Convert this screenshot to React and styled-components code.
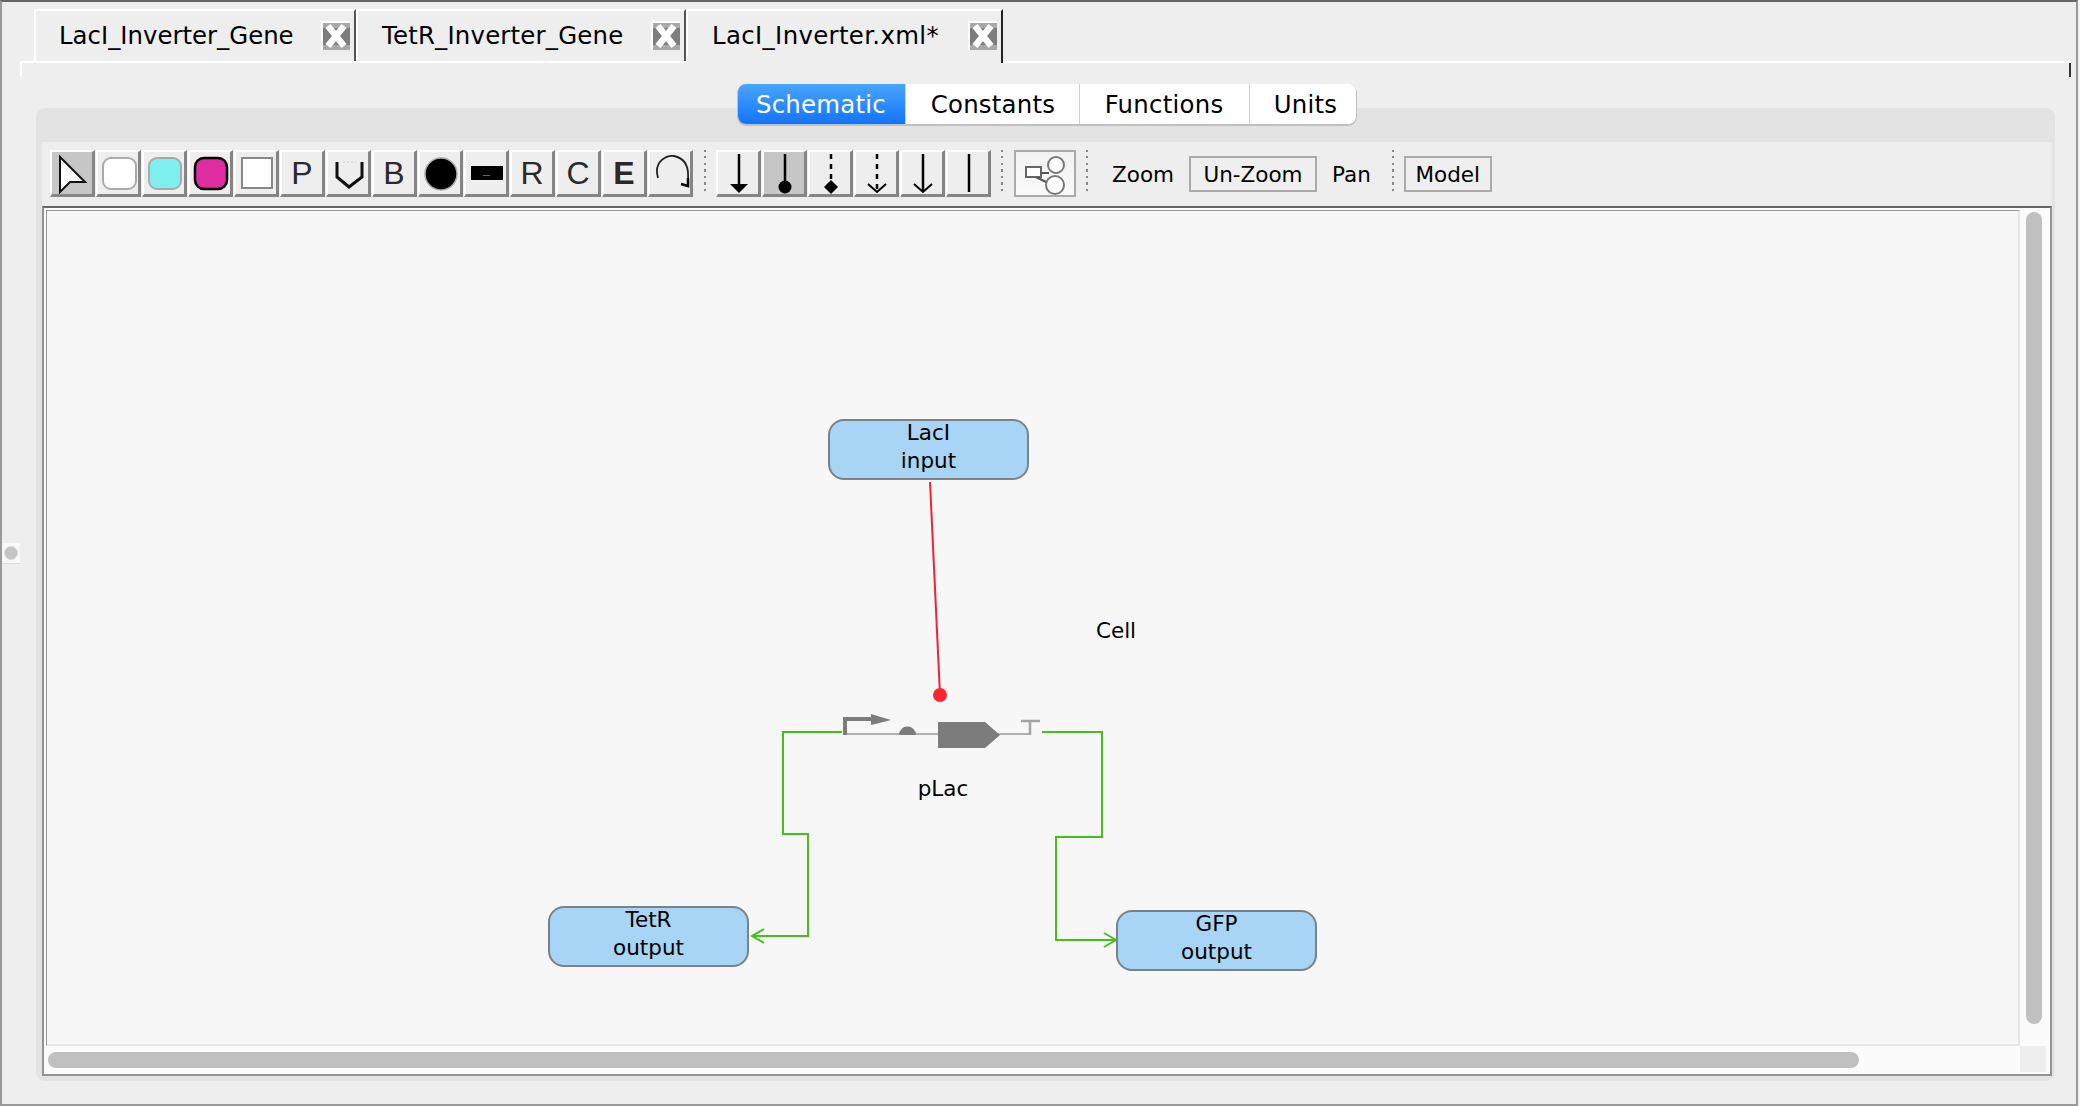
import React from 'react';
import styled, { createGlobalStyle } from 'styled-components';

const Global = createGlobalStyle`
    html, body {
        margin: 0;
        padding: 0;
        background: #f4f4f4;
    }
    body {
        font-family: "DejaVu Sans", "Liberation Sans", sans-serif;
        color: #000;
    }
`;

const Frame = styled.div`
    position: relative;
    box-sizing: border-box;
    width: 2078px;
    height: 1106px;
    background: #eeeeee;
    border: 2px solid #999;
    border-top-color: #666;
    overflow: hidden;
`;

const Handle = styled.div`
    position: absolute;
    left: 0;
    top: 541px;
    width: 18px;
    height: 20px;
    background: #f8f8f8;
    border-bottom: 1px solid #ddd;
    display: flex;
    align-items: center;
    justify-content: center;
    &::after {
        content: '';
        width: 12px;
        height: 12px;
        border-radius: 50%;
        background: #c4c4c4;
        border: 1px solid #d8d8d8;
    }
`;

const TabStrip = styled.div`
    display: flex;
    height: 51px;
    padding: 7px 0 0 32px;
    box-sizing: content-box;
`;

const Tab = styled.div`
    position: relative;
    box-sizing: border-box;
    width: ${(p) => p.$w}px;
    height: ${(p) => (p.$active ? 54 : 52)}px;
    display: flex;
    align-items: center;
    padding: 0 4px ${(p) => (p.$active ? 4 : 2)}px 23px;
    background: #eeeeee;
    border-top: 2px solid #fff;
    border-left: 2px solid #fff;
    border-right: 2px solid ${(p) => (p.$active ? '#222' : '#555')};
    font-size: 24.4px;
    z-index: 1;
`;

const TabLabel = styled.span`
    flex: 1;
    margin-left: ${(p) => p.$ml || 0}px;
    letter-spacing: ${(p) => p.$ls || 0}px;
    white-space: nowrap;
`;

const CloseBox = styled.svg`
    width: 29px;
    height: 29px;
    flex: none;
`;

const TabRule = styled.div`
    box-sizing: border-box;
    height: 15px;
    margin: 1px 5px 0 18px;
    border-top: 2px solid #fff;
    border-left: 2px solid #fff;
    display: flex;
    justify-content: flex-end;
    &::after {
        content: '';
        width: 2px;
        height: 14px;
        background: #333;
    }
`;

const Panel = styled.div`
    box-sizing: border-box;
    width: 2019px;
    height: 973px;
    margin: 32px 0 0 34px;
    padding: 0 3px 5px 6px;
    background: #e3e3e3;
    border-radius: 9px;
    display: flex;
    flex-direction: column;
`;

const PanelHead = styled.div`
    height: 34px;
    flex: none;
    display: flex;
    justify-content: center;
`;

const Segments = styled.div`
    display: flex;
    height: 40px;
    margin: -24px 0 0 -1px;
    border-radius: 8px;
    overflow: hidden;
    background: #fff;
    box-shadow: 0 1px 0 1px #c0c0c0;
`;

const Segment = styled.div`
    box-sizing: border-box;
    width: ${(p) => p.$w}px;
    display: flex;
    align-items: center;
    justify-content: center;
    padding-left: ${(p) => p.$pl || 0}px;
    font-size: 24.4px;
    letter-spacing: 0.25px;
    color: ${(p) => (p.$active ? '#fff' : '#000')};
    background: ${(p) => (p.$active ? 'linear-gradient(#4aa5fd, #1274fa)' : '#fff')};
    border-right: 1px solid #d0d0d0;
    &:last-child {
        border-right: 0;
    }
`;

const Toolbar = styled.div`
    height: 64px;
    flex: none;
    box-sizing: border-box;
    display: flex;
    align-items: flex-start;
    padding: 8px 0 0 8px;
    background: #eeeeee;
`;

const ToolGroup = styled.div`
    display: flex;
    gap: 1px;
`;

const ToolButton = styled.div`
    box-sizing: border-box;
    width: 45px;
    height: 47px;
    display: flex;
    align-items: center;
    justify-content: center;
    background: ${(p) => (p.$on ? '#c6c6c6' : '#eeeeee')};
    border-top: 2px solid #fff;
    border-left: 2px solid #fff;
    border-right: 3px solid #858585;
    border-bottom: 3px solid #858585;
    font-family: "Liberation Sans", sans-serif;
    font-size: 32px;
    font-weight: ${(p) => (p.$bold ? 700 : 400)};
    color: #2a2a2a;
    line-height: 1;
`;

const ToolIcon = styled.svg`
    width: 40px;
    height: 42px;
    display: block;
`;

const Dots = styled.div`
    flex: none;
    width: 2px;
    height: 44px;
    margin: 0 ${(p) => p.$right}px 0 ${(p) => p.$left}px;
    background: repeating-linear-gradient(#888 0 2px, transparent 2px 6.5px);
`;

const GraphToggle = styled.div`
    box-sizing: border-box;
    width: 62px;
    height: 47px;
    border: 2px solid #aaa;
    background: linear-gradient(#f2f2f2, #fafafa);
`;

const ToolText = styled.div`
    display: flex;
    align-items: center;
    height: 36px;
    margin: 6px 0 0 ${(p) => p.$left}px;
    font-size: 21.5px;
    white-space: nowrap;
`;

const ToolBox = styled(ToolText)`
    box-sizing: border-box;
    justify-content: center;
    width: ${(p) => p.$w}px;
    border: 2px solid #aaa;
    background: #efefef;
`;

const ScrollPane = styled.div`
    flex: 1;
    min-height: 0;
    box-sizing: border-box;
    display: grid;
    grid-template-columns: 1fr 26px;
    grid-template-rows: 1fr 26px;
    padding: 2px 4px 2px 2px;
    background: #fbfbfb;
    border: 2px solid #939393;
    border-top-color: #666;
`;

const Viewport = styled.div`
    position: relative;
    overflow: hidden;
    background: #f7f7f7;
    border-top: 1px solid #999;
    border-left: 1px solid #999;
    border-right: 2px solid #e6e6e6;
    border-bottom: 2px solid #e6e6e6;
`;

const VTrack = styled.div`
    padding: 2px 0 0 6px;
`;

const VThumb = styled.div`
    width: 16px;
    height: 812px;
    border-radius: 8px;
    background: #c0c0c0;
`;

const HTrack = styled.div`
    padding: 6px 0 0 2px;
`;

const HThumb = styled.div`
    width: 1811px;
    height: 16px;
    border-radius: 8px;
    background: #c0c0c0;
`;

const Corner = styled.div`
    background: #eeeeee;
`;

const Edges = styled.svg`
    position: absolute;
    left: 0;
    top: 0;
    width: 2000px;
    height: 860px;
`;

const Node = styled.div`
    position: absolute;
    left: ${(p) => p.$x}px;
    top: ${(p) => p.$y}px;
    box-sizing: border-box;
    width: 201px;
    height: 61px;
    display: flex;
    flex-direction: column;
    align-items: center;
    background: #a8d4f5;
    border: 2px solid #7a8289;
    border-radius: 16px;
    font-size: 21.5px;
    line-height: 28px;
    & > span {
        position: relative;
        top: -2px;
    }
`;

const Label = styled.div`
    position: absolute;
    left: ${(p) => p.$x}px;
    top: ${(p) => p.$y}px;
    font-size: 21.5px;
    line-height: 28px;
    transform: translateX(-50%);
`;

// page coordinates are shifted by the viewport origin (47, 211)
const P = (x, y) => `${x - 47},${y - 211}`;

const Cross = () => (
    <CloseBox viewBox="0 0 29 29">
        <rect x="0" y="0" width="29" height="29" fill="#fff" />
        <rect x="2" y="2" width="27" height="27" fill="#7d7d7d" />
        <path d="M2 2 H29 V7 H2 Z M2 24 H29 V29 H2 Z" fill="#a8a8a8" />
        <path d="M7 5 L23 25 M23 5 L7 25" stroke="#fff" strokeWidth="6.5" />
    </CloseBox>
);

const Tool = ({ on, bold, children }) => (
    <ToolButton $on={on} $bold={bold}>
        {children}
    </ToolButton>
);

const Icon = ({ children }) => <ToolIcon viewBox="0 0 40 42">{children}</ToolIcon>;

const dash = '5 5';

function App() {
    return (
        <>
            <Global />
            <Frame>
                <Handle />
                <TabStrip>
                    <Tab $w={322}>
                        <TabLabel>LacI_Inverter_Gene</TabLabel>
                        <Cross />
                    </Tab>
                    <Tab $w={330}>
                        <TabLabel $ml={1} $ls={0.2}>TetR_Inverter_Gene</TabLabel>
                        <Cross />
                    </Tab>
                    <Tab $w={317} $active>
                        <TabLabel $ml={1} $ls={0.35}>LacI_Inverter.xml*</TabLabel>
                        <Cross />
                    </Tab>
                </TabStrip>
                <TabRule />
                <Panel>
                    <PanelHead>
                        <Segments>
                            <Segment $w={168} $active>Schematic</Segment>
                            <Segment $w={174} $pl={2}>Constants</Segment>
                            <Segment $w={170}>Functions</Segment>
                            <Segment $w={106} $pl={6}>Units</Segment>
                        </Segments>
                    </PanelHead>
                    <Toolbar>
                        <ToolGroup>
                            <Tool on>
                                <Icon>
                                    <path d="M8 5 L33 30 L18 30 L8 40 Z" fill="#fff" stroke="#111" strokeWidth="2" />
                                </Icon>
                            </Tool>
                            <Tool>
                                <Icon>
                                    <rect x="5" y="6" width="33" height="31" rx="8" fill="#fff" stroke="#aaa" strokeWidth="2" />
                                </Icon>
                            </Tool>
                            <Tool>
                                <Icon>
                                    <rect x="5" y="6" width="32" height="31" rx="8" fill="#7ff0f0" stroke="#aaa" strokeWidth="2" />
                                </Icon>
                            </Tool>
                            <Tool>
                                <Icon>
                                    <rect x="5" y="6" width="32" height="31" rx="9" fill="#df2ca0" stroke="#000" strokeWidth="2.5" />
                                </Icon>
                            </Tool>
                            <Tool>
                                <Icon>
                                    <rect x="6" y="6" width="30" height="30" fill="#fff" stroke="#888" strokeWidth="2" />
                                </Icon>
                            </Tool>
                            <Tool>P</Tool>
                            <Tool>
                                <Icon>
                                    <path d="M9 10 L9 25 L21 35 L34 25 L34 10" fill="none" stroke="#111" strokeWidth="3" />
                                    <path d="M15 10 H28" stroke="#ddd" strokeWidth="2" strokeDasharray="2 2" />
                                </Icon>
                            </Tool>
                            <Tool>B</Tool>
                            <Tool>
                                <Icon>
                                    <circle cx="21" cy="22" r="16" fill="#000" stroke="#aaa" strokeWidth="1.5" />
                                </Icon>
                            </Tool>
                            <Tool>
                                <Icon>
                                    <rect x="5" y="14" width="32" height="14" fill="#000" />
                                    <rect x="17" y="23" width="7" height="1" fill="#666" />
                                </Icon>
                            </Tool>
                            <Tool>R</Tool>
                            <Tool>C</Tool>
                            <Tool bold>E</Tool>
                            <Tool>
                                <Icon>
                                    <path d="M8 26 C3 8 18 3 24 4 C34 6 39 14 38 27" fill="none" stroke="#222" strokeWidth="1.8" />
                                    <path d="M31 32 L38 34 L38 26" fill="none" stroke="#000" strokeWidth="2.5" />
                                </Icon>
                            </Tool>
                        </ToolGroup>
                        <Dots $left={11} $right={10} />
                        <ToolGroup>
                            <Tool>
                                <Icon>
                                    <path d="M21 2 V33" stroke="#000" strokeWidth="2.5" />
                                    <path d="M12 32 H30 L21 41 Z" fill="#000" />
                                </Icon>
                            </Tool>
                            <Tool on>
                                <Icon>
                                    <path d="M21 2 V32" stroke="#000" strokeWidth="2.5" />
                                    <circle cx="21" cy="35" r="6.5" fill="#000" />
                                </Icon>
                            </Tool>
                            <Tool>
                                <Icon>
                                    <path d="M21 2 V30" stroke="#000" strokeWidth="2.5" strokeDasharray={dash} />
                                    <path d="M21 28 L28 35 L21 42 L14 35 Z" fill="#000" />
                                </Icon>
                            </Tool>
                            <Tool>
                                <Icon>
                                    <path d="M21 2 V39" stroke="#000" strokeWidth="2.5" strokeDasharray={dash} />
                                    <path d="M12 32 L21 40 L30 32" fill="none" stroke="#000" strokeWidth="2" />
                                </Icon>
                            </Tool>
                            <Tool>
                                <Icon>
                                    <path d="M21 2 V39" stroke="#000" strokeWidth="2.5" />
                                    <path d="M12 32 L21 40 L30 32" fill="none" stroke="#000" strokeWidth="2" />
                                </Icon>
                            </Tool>
                            <Tool>
                                <Icon>
                                    <path d="M21 2 V40" stroke="#000" strokeWidth="2.5" />
                                </Icon>
                            </Tool>
                        </ToolGroup>
                        <Dots $left={10} $right={11} />
                        <GraphToggle>
                            <svg width="58" height="43" viewBox="0 0 58 43">
                                <rect x="10" y="15" width="15" height="10" fill="#fff" stroke="#666" strokeWidth="2" />
                                <path d="M25 21 H33 M20 25 L32 31" stroke="#555" strokeWidth="2" />
                                <circle cx="40" cy="13" r="8" fill="#fff" stroke="#777" strokeWidth="2" />
                                <circle cx="39" cy="33" r="9" fill="#fff" stroke="#777" strokeWidth="2" />
                            </svg>
                        </GraphToggle>
                        <Dots $left={10} $right={0} />
                        <ToolText $left={24}>Zoom</ToolText>
                        <ToolBox $left={15} $w={128}>Un-Zoom</ToolBox>
                        <ToolText $left={15}>Pan</ToolText>
                        <Dots $left={21} $right={0} />
                        <ToolBox $left={10} $w={88}>Model</ToolBox>
                    </Toolbar>
                    <ScrollPane>
                        <Viewport>
                            <Edges viewBox="0 0 2000 860">
                                <polyline points={`${P(930, 482)} ${P(940, 695)}`} fill="none" stroke="#f5222d" strokeWidth="2" />
                                <circle cx={940 - 47} cy={695 - 211} r="7" fill="#fb2530" />
                                <polyline
                                    points={`${P(842, 732)} ${P(783, 732)} ${P(783, 834)} ${P(808, 834)} ${P(808, 936)} ${P(752, 936)}`}
                                    fill="none"
                                    stroke="#45c01a"
                                    strokeWidth="2"
                                />
                                <polyline points={`${P(764, 929)} ${P(752, 936)} ${P(764, 943)}`} fill="none" stroke="#45c01a" strokeWidth="2" />
                                <polyline
                                    points={`${P(1042, 732)} ${P(1102, 732)} ${P(1102, 837)} ${P(1056, 837)} ${P(1056, 940)} ${P(1116, 940)}`}
                                    fill="none"
                                    stroke="#45c01a"
                                    strokeWidth="2"
                                />
                                <polyline points={`${P(1104, 933)} ${P(1116, 940)} ${P(1104, 947)}`} fill="none" stroke="#45c01a" strokeWidth="2" />
                                {/* gene glyph */}
                                <path d={`M${P(846, 734)} H${1030 - 47}`} stroke="#b0b0b0" strokeWidth="2" />
                                <path d={`M${P(845, 735)} V${719 - 211} H${874 - 47}`} fill="none" stroke="#7c7c7c" strokeWidth="4" />
                                <polygon points={`${P(871, 714)} ${P(891, 720)} ${P(871, 725)}`} fill="#7c7c7c" />
                                <path d={`M${P(899, 735)} A8 8 0 0 1 ${P(916, 735)} Z`} fill="#7c7c7c" />
                                <polygon points={`${P(938, 722)} ${P(985, 722)} ${P(1000, 735)} ${P(985, 748)} ${P(938, 748)}`} fill="#7c7c7c" />
                                <path d={`M${P(1030, 735)} V${721 - 211} M${P(1021, 721)} H${1040 - 47}`} fill="none" stroke="#a4a4a4" strokeWidth="2.5" />
                            </Edges>
                            <Node $x={781} $y={208}>
                                <span>LacI</span>
                                <span>input</span>
                            </Node>
                            <Node $x={501} $y={695}>
                                <span>TetR</span>
                                <span>output</span>
                            </Node>
                            <Node $x={1069} $y={699}>
                                <span>GFP</span>
                                <span>output</span>
                            </Node>
                            <Label $x={1069} $y={406}>Cell</Label>
                            <Label $x={896} $y={564}>pLac</Label>
                        </Viewport>
                        <VTrack>
                            <VThumb />
                        </VTrack>
                        <HTrack>
                            <HThumb />
                        </HTrack>
                        <Corner />
                    </ScrollPane>
                </Panel>
            </Frame>
        </>
    );
}

export default App;
